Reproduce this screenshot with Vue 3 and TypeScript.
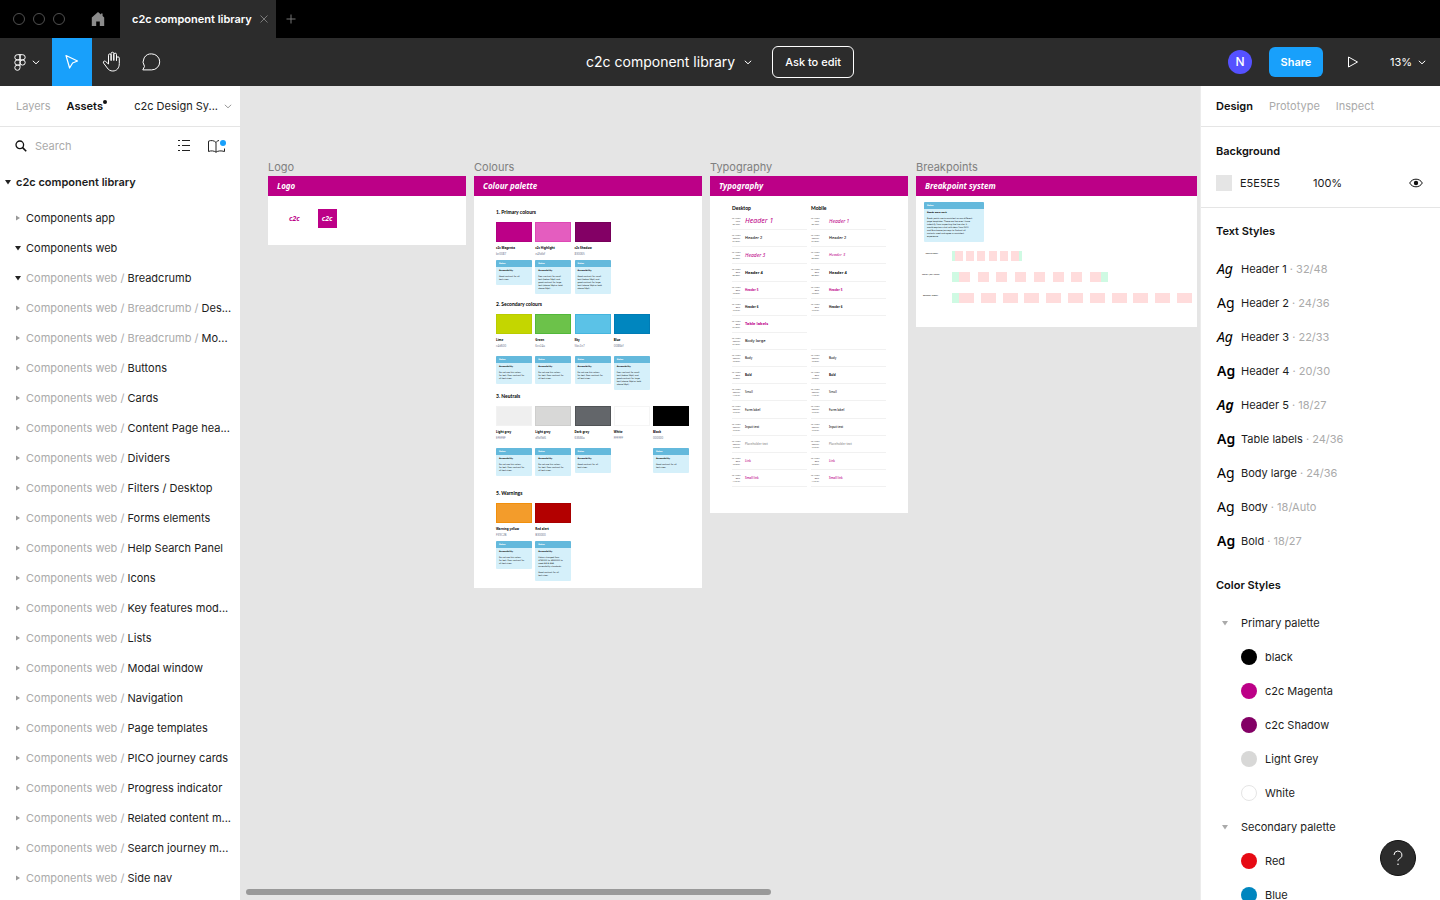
<script setup lang="ts">
interface TreeItem { path: string; name: string; open?: boolean }
interface Note { title: string; lines: string }
interface Swatch { name: string; hex: string; color: string; edge: string; note?: Note }
interface Section { title: string; tight: boolean; swatches: Swatch[] }
interface TypeRow { label: string; meta: string; desk: string; mob: string; tall?: boolean; noMobile?: boolean; noLine?: boolean }
interface TextStyle { name: string; size: string; italic: boolean; bold: boolean }
interface ColorGroup { name: string; items: { name: string; color: string }[] }

const web = 'Components web / '
const tree: TreeItem[] = [
  { path: '', name: 'Components app' },
  { path: '', name: 'Components web', open: true },
  { path: web, name: 'Breadcrumb', open: true },
  { path: web + 'Breadcrumb / ', name: 'Des...' },
  { path: web + 'Breadcrumb / ', name: 'Mo...' },
  ...[
    'Buttons', 'Cards', 'Content Page hea...', 'Dividers', 'Filters / Desktop', 'Forms elements',
    'Help Search Panel', 'Icons', 'Key features mod...', 'Lists', 'Modal window', 'Navigation',
    'Page templates', 'PICO journey cards', 'Progress indicator', 'Related content m...',
    'Search journey m...', 'Side nav',
  ].map((name) => ({ path: web, name })),
]

const good: Note = { title: 'Accessibility', lines: 'Good contrast for all\ntext sizes.' }
const avoid: Note = { title: 'Accessibility', lines: 'Do not use this colour\nfor text. Poor contrast for\nall text sizes.' }
const poor: Note = { title: 'Accessibility', lines: 'Poor contrast for small\ntext (below 18pt) and\ngood contrast for large\ntext (above 18pt or bold\nabove 14pt).' }
const goodLong: Note = { title: 'Accessibility', lines: 'Good contrast for small\ntext (below 18pt) and\ngood contrast for large\ntext (above 18pt or bold\nabove 14pt).' }
const changed: Note = { title: 'Accessibility', lines: 'Colour changed from\n#FA1100 to #B30000 to\nmeet AA & AAA\naccessibility standards.\n\nGood contrast for all\ntext sizes.' }
const review: Note = { title: 'Needs more work', lines: 'Break points are inconsistent across different\npage templates. These are the ones I have\nindentify from inspecting the live site. It\nwould require a chat with devs from PICO\nand Brushwave journeys to find out all\nvariants used and agree a consistent\nexperience.' }

const sections: Section[] = [
  { title: '1. Primary colours', tight: true, swatches: [
    { name: 'c2c Magenta', hex: 'bc0087', color: '#bc0087', edge: '#b00080', note: good },
    { name: 'c2c Highlight', hex: 'e45dbf', color: '#e45dbf', edge: '#de48b5', note: poor },
    { name: 'c2c Shadow', hex: '830065', color: '#830065', edge: '#760059', note: goodLong },
  ] },
  { title: '2. Secondary colours', tight: false, swatches: [
    { name: 'Lime', hex: 'c4d600', color: '#c4d600', edge: '#b9cc00', note: avoid },
    { name: 'Green', hex: '6cc24a', color: '#6cc24a', edge: '#52b83a', note: avoid },
    { name: 'Sky', hex: '5bc2e7', color: '#5bc2e7', edge: '#45b5de', note: avoid },
    { name: 'Blue', hex: '0086bf', color: '#0086bf', edge: '#007cb5', note: poor },
  ] },
  { title: '3. Neutrals', tight: false, swatches: [
    { name: 'Light grey', hex: 'EFEFEF', color: '#efefef', edge: '#f2f2f2', note: avoid },
    { name: 'Light grey', hex: 'd9d9d6', color: '#d8d8d7', edge: '#cececd', note: avoid },
    { name: 'Dark grey', hex: '63666a', color: '#63666a', edge: '#505356', note: good },
    { name: 'White', hex: 'FFFFFF', color: '#ffffff', edge: '#f5f5f5' },
    { name: 'Black', hex: '000000', color: '#000000', edge: '#000000', note: good },
  ] },
  { title: '5. Warnings', tight: true, swatches: [
    { name: 'Warning yellow', hex: 'F39C2B', color: '#f39c2b', edge: '#f18f0c', note: avoid },
    { name: 'Red alert', hex: 'B30000', color: '#b30000', edge: '#a80000', note: changed },
  ] },
]

const typeRows: TypeRow[] = [
  { label: 'Header 1', meta: 'FS Albert\nItalic\n32/48px', desk: 's7 it mag', mob: 's5 it mag' },
  { label: 'Header 2', meta: 'FS Albert\nRegular\n24/36px', desk: 's4 md', mob: 's4 md' },
  { label: 'Header 3', meta: 'FS Albert\nItalic\n22/33px', desk: 's5 it mag', mob: 's4 it mag' },
  { label: 'Header 4', meta: 'FS Albert\nBold\n20/30px', desk: 's4 bd', mob: 's4 bd', tall: true },
  { label: 'Header 5', meta: 'FS Albert\nBold\n18/27px', desk: 's3 bd mag', mob: 's3 bd mag' },
  { label: 'Header 6', meta: 'FS Albert\nBold\n16/24px', desk: 's3 bd', mob: 's3 bd' },
  { label: 'Table labels', meta: 'FS Albert\nBold\n24/36px', desk: 's4 bd mag', mob: '', noMobile: true, noLine: true },
  { label: 'Body large', meta: 'FS Albert\nRegular\n24/36px', desk: 's4 md', mob: '', noMobile: true },
  { label: 'Body', meta: 'FS Albert\nRegular\n18/27px', desk: 's3 md', mob: 's3 md' },
  { label: 'Bold', meta: 'FS Albert\nBold\n18/27px', desk: 's3 bd', mob: 's3 bd' },
  { label: 'Small', meta: 'FS Albert\nRegular\n14/21px', desk: 's3', mob: 's3' },
  { label: 'Form label', meta: 'FS Albert\nRegular\n16/24px', desk: 's3 md', mob: 's3 md', tall: true },
  { label: 'Input text', meta: 'FS Albert\nRegular\n16/24px', desk: 's3 md', mob: 's3 md' },
  { label: 'Placeholder text', meta: 'FS Albert\nRegular\n16/24px', desk: 's3 dim', mob: 's3 dim' },
  { label: 'Link', meta: 'FS Albert\nBold\n18/27px', desk: 's3 md mag', mob: 's3 md mag' },
  { label: 'Small link', meta: 'FS Albert\nBold\n14/21px', desk: 's3 md mag', mob: 's3 md mag' },
]

const grids = [
  { label: 'Mobile 360px', cls: 'small', columns: 6, end: true },
  { label: 'Tablet 1,024-768px', cls: 'medium', columns: 8, end: true },
  { label: 'Desktop 1280px', cls: 'large', columns: 11, end: false },
]

const textStyles: TextStyle[] = [
  { name: 'Header 1', size: '32/48', italic: true, bold: false },
  { name: 'Header 2', size: '24/36', italic: false, bold: false },
  { name: 'Header 3', size: '22/33', italic: true, bold: false },
  { name: 'Header 4', size: '20/30', italic: false, bold: true },
  { name: 'Header 5', size: '18/27', italic: true, bold: true },
  { name: 'Table labels', size: '24/36', italic: false, bold: true },
  { name: 'Body large', size: '24/36', italic: false, bold: false },
  { name: 'Body', size: '18/Auto', italic: false, bold: false },
  { name: 'Bold', size: '18/27', italic: false, bold: true },
]

const colorGroups: ColorGroup[] = [
  { name: 'Primary palette', items: [
    { name: 'black', color: '#000000' },
    { name: 'c2c Magenta', color: '#bc0087' },
    { name: 'c2c Shadow', color: '#830065' },
    { name: 'Light Grey', color: '#d8d8d7' },
    { name: 'White', color: '#ffffff' },
  ] },
  { name: 'Secondary palette', items: [
    { name: 'Red', color: '#e60a14' },
    { name: 'Blue', color: '#0086bf' },
  ] },
]
</script>

<template>
  <div class="app">
    <header class="tabbar">
      <div class="lights"><i></i><i></i><i></i></div>
      <button class="home" aria-label="Home">
        <svg width="14" height="14" viewBox="0 0 14 14"><path d="M7 0 .8 5.4V14h4.4V9.4h3.6V14h4.4V5.4L11.6 4V1.4H10v1.2z" fill="#8c8c8c" /></svg>
      </button>
      <div class="filetab">
        <span>c2c component library</span>
        <button aria-label="Close tab">
          <svg width="8" height="8" viewBox="0 0 8 8"><path d="m.5.5 7 7m0-7-7 7" stroke="#7a7a7a" fill="none" /></svg>
        </button>
      </div>
      <button class="plus" aria-label="New tab">
        <svg width="10" height="10" viewBox="0 0 10 10"><path d="M5 .5v9M.5 5h9" stroke="#777" fill="none" /></svg>
      </button>
    </header>

    <div class="toolbar">
      <div class="tools">
        <button class="menu" aria-label="Main menu">
          <svg width="12" height="17" viewBox="0 0 12 17" fill="none" stroke="#fff"><path d="M6 .7H3.4a2.6 2.6 0 0 0 0 5.2H6zM6 .7h2.6a2.6 2.6 0 0 1 0 5.2H6zM6 5.900H3.400a2.600 2.600 0 0 0 0 5.200H6zM6 11.100H3.400A2.600 2.600 0 1 0 6 13.700z" /><circle cx="8.600" cy="8.500" r="2.600" /></svg>
          <svg width="8" height="5" viewBox="0 0 8 5"><path d="m.8.8 3.200 3 3.200-3" stroke="#fff" fill="none" /></svg>
        </button>
        <button class="tool active" aria-label="Move">
          <svg width="14" height="16" viewBox="0 0 14 16"><path d="M1 1.500 12.500 7 7.600 9 4.600 14z" stroke="#fff" stroke-width="1.200" stroke-linejoin="round" fill="none" /></svg>
        </button>
        <button class="tool" aria-label="Hand">
          <svg width="20" height="22" viewBox="0 0 20 22" fill="none" stroke="#fff" stroke-linecap="round" stroke-linejoin="round"><path d="M6.500 10V4.200a1.300 1.300 0 0 1 2.600 0V9.500M9.100 9V2.600a1.300 1.300 0 0 1 2.700 0V9.300M11.800 9V3.500a1.300 1.300 0 0 1 2.700 0v6M14.500 7.200a1.400 1.400 0 0 1 2.800 0v5.300c0 4.500-2.500 7.500-6.500 7.500-2.500 0-4.200-1-5.500-3L1.600 12.100c-.9-1.400.7-2.700 1.900-1.700l3 2.600V9.500" /></svg>
        </button>
        <button class="tool" aria-label="Comment">
          <svg width="20" height="18" viewBox="1 0 20 18"><path d="M10.700.9a8 8 0 1 1 0 16H1.800l1.700-3.500A8 8 0 0 1 10.700.9z" stroke="#fff" fill="none" stroke-linejoin="round" /></svg>
        </button>
      </div>
      <div class="filebar">
        <button class="filename">c2c component library
          <svg width="8" height="5" viewBox="0 0 8 5"><path d="m.8.8 3.200 3 3.200-3" stroke="#fff" fill="none" /></svg>
        </button>
        <button class="ask">Ask to edit</button>
      </div>
      <div class="actions">
        <span class="avatar">N</span>
        <button class="share">Share</button>
        <button class="play" aria-label="Present">
          <svg width="12" height="12" viewBox="0 0 12 12"><path d="M1.500 1v10l9-5z" stroke="#fff" fill="none" stroke-linejoin="round" /></svg>
        </button>
        <button class="zoom">13%
          <svg width="8" height="5" viewBox="0 0 8 5"><path d="m.8.8 3.200 3 3.200-3" stroke="#fff" fill="none" /></svg>
        </button>
      </div>
    </div>

    <main class="body">
      <aside class="left">
        <nav class="tabs">
          <button>Layers</button>
          <button class="on assets">Assets<i class="dot"></i></button>
          <button class="page">c2c Design Sy...
            <svg width="8" height="5" viewBox="0 0 8 5"><path d="m.8.8 3.200 3 3.200-3" stroke="#999" fill="none" /></svg>
          </button>
        </nav>
        <div class="search">
          <label for="asset-search" aria-label="Search assets">
            <svg width="12" height="12" viewBox="0 0 12 12" fill="none" stroke="#111"><circle cx="4.800" cy="4.800" r="3.800" stroke-width="1.300" /><path d="m7.600 7.600 3.600 3.600" stroke-width="1.600" /></svg>
          </label>
          <input id="asset-search" type="text" placeholder="Search" />
          <button aria-label="List view">
            <svg width="14" height="12" viewBox="0 0 14 12"><path d="M0 .5h2M4 .5h8M0 5.500h2M4 5.500h8M0 10.500h2M4 10.500h8" stroke="#222" fill="none" /></svg>
          </button>
          <button aria-label="Team library">
            <svg width="20" height="14" viewBox="0 0 20 14"><path d="M9 3.500C7.500 1.500 4 1 1.500 2.200v10.300c2.500-1 5.500-.8 7.500.7 2-1.500 5-1.700 8.500-.7V9.500M9 3.500v9.700M9 3.500c.5-1 1.500-1.700 3-2" stroke="#222" fill="none" /><circle cx="16" cy="4" r="3" fill="#18a0fb" /></svg>
          </button>
        </div>
        <button class="root"><svg width="6" height="5" viewBox="0 0 6 5"><path d="M0 0h6L3 4.500z" fill="#222" /></svg>c2c component library</button>
        <ul class="tree">
          <li v-for="(t, i) in tree" :key="i">
            <button>
              <svg width="6" height="6" viewBox="0 0 6 6"><path v-if="t.open" d="M0 1h6L3 5.500z" fill="#222" /><path v-else d="M1 .5v5L5 3z" fill="#999" /></svg>
              <span><span class="path">{{ t.path }}</span>{{ t.name }}</span>
            </button>
          </li>
        </ul>
      </aside>

      <section class="canvas">
        <div class="frames">
          <div class="frame logo">
            <h2>Logo</h2>
            <div class="sheet">
              <h3>Logo</h3>
              <div class="marks"><span>c2c</span><span class="inverse">c2c</span></div>
            </div>
          </div>

          <div class="frame colours">
            <h2>Colours</h2>
            <div class="sheet">
              <h3>Colour palette</h3>
              <div class="sections">
                <div v-for="s in sections" :key="s.title" class="section" :class="{ tight: s.tight }">
                  <h4>{{ s.title }}</h4>
                  <div class="swatches">
                    <div v-for="(c, i) in s.swatches" :key="i" class="swatch">
                      <div class="chip" :style="{ background: c.color, borderColor: c.edge }"></div>
                      <b>{{ c.name }}</b>
                      <span>{{ c.hex }}</span>
                      <div v-if="c.note" class="note">
                        <header>Notes</header>
                        <strong>{{ c.note.title }}</strong>
                        <p>{{ c.note.lines }}</p>
                      </div>
                    </div>
                  </div>
                </div>
              </div>
            </div>
          </div>

          <div class="frame type">
            <h2>Typography</h2>
            <div class="sheet">
              <h3>Typography</h3>
              <div class="columns">
                <div class="column">
                  <h4>Desktop</h4>
                  <div v-for="r in typeRows" :key="r.label" class="trow" :class="{ tall: r.tall }">
                    <small>{{ r.meta }}</small><span :class="r.desk">{{ r.label }}</span>
                  </div>
                </div>
                <div class="column mobile">
                  <h4>Mobile</h4>
                  <div v-for="r in typeRows" :key="r.label" class="trow" :class="{ tall: r.tall, bare: r.noLine }">
                    <template v-if="!r.noMobile"><small>{{ r.meta }}</small><span :class="r.mob">{{ r.label }}</span></template>
                  </div>
                </div>
              </div>
            </div>
          </div>

          <div class="frame breaks">
            <h2>Breakpoints</h2>
            <div class="sheet">
              <h3>Breakpoint system</h3>
              <div class="note wide">
                <header>Notes</header>
                <strong>{{ review.title }}</strong>
                <p>{{ review.lines }}</p>
              </div>
              <div class="grids">
                <div v-for="g in grids" :key="g.cls" class="gridrow" :class="g.cls">
                  <span>{{ g.label }}</span>
                  <i class="margin"></i>
                  <div class="cols"><i v-for="n in g.columns" :key="n"></i></div>
                  <i v-if="g.end" class="margin"></i>
                </div>
              </div>
            </div>
          </div>
        </div>
        <div class="scrollbar"></div>
      </section>

      <aside class="right">
        <nav class="tabs">
          <button class="on">Design</button>
          <button>Prototype</button>
          <button>Inspect</button>
        </nav>
        <div class="background">
          <h5>Background</h5>
          <div class="fill">
            <i class="square"></i>
            <span class="hex">E5E5E5</span>
            <span>100%</span>
            <button aria-label="Toggle visibility">
              <svg width="14" height="10" viewBox="0 0 14 10"><path d="M.7 5C3.400-.1 10.600-.1 13.300 5 10.600 10.100 3.400 10.100.7 5z" fill="none" stroke="#111" /><circle cx="7" cy="5" r="2.200" fill="#111" /></svg>
            </button>
          </div>
        </div>
        <h5 class="heading">Text Styles</h5>
        <ul class="styles">
          <li v-for="t in textStyles" :key="t.name">
            <span class="ag" :class="{ italic: t.italic, bold: t.bold }">Ag</span>
            <span>{{ t.name }}<em> · {{ t.size }}</em></span>
          </li>
        </ul>
        <h5 class="heading second">Color Styles</h5>
        <div v-for="g in colorGroups" :key="g.name" class="group">
          <button><svg width="6" height="5" viewBox="0 0 6 5"><path d="M0 0h6L3 4.500z" fill="#aaa" /></svg>{{ g.name }}</button>
          <ul>
            <li v-for="c in g.items" :key="c.name"><i :class="{ ring: c.name === 'White' }" :style="{ background: c.color }"></i>{{ c.name }}</li>
          </ul>
        </div>
      </aside>
    </main>
    <button class="help" aria-label="Help">
      <svg width="12" height="16" viewBox="0 0 12 16"><path d="M2 5a4 4 0 1 1 5.800 3.600C6.500 9.200 6 9.700 6 11.200" stroke="#fff" fill="none" /><circle cx="6" cy="14.200" r=".8" fill="#fff" /></svg>
    </button>
  </div>
</template>

<style>
body { margin: 0; background: #e5e5e5; }
</style>

<style scoped>
.app { height: 100vh; display: flex; flex-direction: column; overflow: hidden; position: relative; font-family: Inter, "Liberation Sans", sans-serif; font-size: 11px; line-height: 16px; color: #1c1c1c; }
.app * { box-sizing: border-box; }
button { border: 0; padding: 0; margin: 0; background: none; font: inherit; color: inherit; display: flex; align-items: center; justify-content: center; white-space: nowrap; cursor: pointer; }
ul { list-style: none; margin: 0; padding: 0; }
h2, h3, h4, h5, p { margin: 0; }
svg { flex: none; display: block; }

.tabbar { flex: none; height: 38px; background: #000; display: flex; align-items: center; }
.lights { display: flex; gap: 8px; padding-left: 13px; }
.lights i { width: 12px; height: 12px; border: 1px solid #505050; border-radius: 50%; }
.home { width: 44px; margin-left: 11px; }
.filetab { align-self: stretch; background: #2c2c2c; color: #fff; font-weight: 600; display: flex; align-items: center; gap: 8px; padding: 0 8px 0 12px; }
.plus { width: 30px; }

.toolbar { flex: none; height: 48px; background: #2c2c2c; color: #fff; display: grid; grid-template-columns: 1fr auto 1fr; align-items: center; }
.tools { display: flex; height: 48px; }
.menu { width: 52px; gap: 6px; padding-left: 2px; }
.tool { width: 40px; }
.tool.active { background: #18a0fb; }
.filebar { display: flex; gap: 20px; align-items: center; }
.filename { font-size: 14px; gap: 9px; }
.ask { border: 1px solid #fff; border-radius: 6px; height: 32px; padding: 0 12px; font-weight: 500; }
.actions { display: flex; justify-content: flex-end; align-items: center; padding-right: 14px; }
.avatar { width: 24px; height: 24px; border-radius: 50%; background: #5551ff; text-align: center; line-height: 24px; margin-right: 17px; font-size: 12px; font-weight: 500; }
.share { background: #18a0fb; border-radius: 6px; width: 54px; height: 30px; font-weight: 600; }
.play { width: 60px; }
.zoom { gap: 6px; margin-left: 7px; }

.body { flex: 1; min-height: 0; display: flex; }
.left, .right { flex: none; width: 240px; background: #fff; overflow: hidden; }
.right { border-left: 1px solid #ececec; }
.tabs { height: 41px; border-bottom: 1px solid #e5e5e5; display: flex; align-items: center; gap: 16px; padding: 0 8px 0 16px; color: #aaa; }
.tabs .on { color: #111; font-weight: 600; }
.right .tabs, .background, .heading, .styles { padding-left: 15px; }
.assets .dot { width: 4px; height: 4px; border-radius: 50%; background: #111; align-self: flex-start; margin-top: 2px; }
.tabs .page { color: #222; gap: 6px; margin-left: auto; }
.search { height: 38px; display: flex; align-items: center; padding: 0 13px 0 15px; }
.search input { flex: 1; min-width: 0; border: 0; outline: 0; padding: 0; margin-left: 8px; font: inherit; color: #222; background: none; }
.search input::placeholder { color: #aaa; opacity: 1; }
.search button + button { margin-left: 15px; }
.root { font-weight: 600; gap: 5px; height: 34px; padding-left: 5px; }
.tree { padding-top: 4px; }
.tree button { height: 30px; gap: 5px; padding-left: 15px; }
.tree span { white-space: pre; }
.tree .path { color: #aaa; }

.canvas { flex: 1; min-width: 0; background: #e5e5e5; overflow: hidden; display: flex; flex-direction: column; justify-content: space-between; }
.frames { display: flex; align-items: flex-start; gap: 8px; padding: 73px 0 0 28px; font-family: "Noto Sans", "Open Sans", sans-serif; }
.frame { flex: none; }
.frame h2 { font: 400 11px/17px Inter, sans-serif; color: #808080; }
.sheet { background: #fff; }
.sheet h3 { background: #bc0087; color: #fff; font-size: 8px; line-height: 20px; font-style: italic; font-weight: 700; padding-left: 9px; }
.logo .sheet { width: 198px; height: 69px; }
.colours .sheet { width: 228px; height: 412px; }
.type .sheet { width: 198px; height: 337px; }
.breaks .sheet { width: 281px; height: 151px; }
.marks { display: flex; gap: 18px; align-items: center; padding: 13px 21px; color: #bc0087; font-style: italic; font-weight: 700; font-size: 7px; line-height: 19px; }
.marks .inverse { width: 19px; height: 19px; background: #bc0087; color: #fff; text-align: center; }

.sections { display: grid; grid-template-rows: 92px 92px 97px auto; padding: 13px 0 0 22px; }
.section h4 { font: 700 5px/6px Lato, sans-serif; color: #000; }
.swatches { display: grid; grid-template-columns: repeat(5, 36px); justify-content: space-between; width: 193px; margin-top: 7px; font-size: 3px; line-height: 6px; }
.chip { height: 20px; border: 1px solid; margin-bottom: 3px; }
.swatch b, .swatch > span { display: block; height: 6px; color: #000; }
.swatch > span { color: #707890; }
.swatch .note { margin-top: 7px; }
.tight .swatch .note { margin-top: 3px; }
.note { background: #d5f0fa; border-radius: 1px; padding-bottom: 4px; font: 2px/3px "DejaVu Sans", sans-serif; color: #000; overflow: hidden; }
.note header { height: 7px; line-height: 7px; background: #64b9dc; color: #fff; font-weight: 700; padding-left: 3px; }
.note strong { display: block; padding: 2px 3px 3px; line-height: 3px; }
.note p { padding-left: 3px; white-space: pre; }
.note.wide { width: 60px; margin: 6px 0 0 8px; }

.columns { display: grid; grid-template-columns: 75px 75px; gap: 4px; padding: 9px 0 0 22px; }
.columns h4 { font: 700 5px/6px Lato, sans-serif; color: #000; height: 8px; }
.trow { height: 17px; display: flex; align-items: center; gap: 5px; border-bottom: 1px solid #f1f1f1; white-space: nowrap; line-height: 8px; color: #111; }
.trow.tall { height: 18px; }
.trow.bare { border-color: transparent; }
.trow small { width: 8px; font-size: 2px; line-height: 3px; white-space: pre; text-align: right; color: #444; }
.mobile .trow { gap: 10px; }
.s7 { font-size: 7px; }
.s5 { font-size: 5px; }
.s4 { font-size: 4px; }
.s3 { font-size: 3px; }
.it { font-style: italic; }
.md { font-weight: 500; }
.bd { font-weight: 700; }
.mag { color: #bc0087; }
.dim { color: #777; }

.grids { display: grid; gap: 11px; padding: 9px 0 0 6px; }
.gridrow { display: flex; height: 10px; }
.gridrow > span { width: 16px; margin-right: 14px; font-size: 2px; line-height: 6px; text-align: right; white-space: nowrap; color: #000; }
.margin { width: 7px; background: #cffae3; }
.small .margin { width: 3px; }
.cols { display: flex; justify-content: space-between; width: 64px; }
.cols i { width: 8px; background: #ffdcdc; }
.medium .cols { width: 142px; }
.medium .cols i { width: 11px; }
.large .cols { width: 233px; }
.large .cols i { width: 15px; }
.scrollbar { width: 525px; height: 6px; border-radius: 3px; background: #999; margin: 0 0 5px 6px; }

h5 { font-size: 11px; line-height: 16px; font-weight: 600; color: #111; }
.background { height: 81px; padding-top: 16px; border-bottom: 1px solid #e5e5e5; }
.fill { display: flex; align-items: center; margin-top: 12px; height: 24px; padding-right: 17px; }
.square { width: 16px; height: 16px; background: #e5e5e5; }
.hex { width: 73px; margin-left: 8px; }
.fill button { margin-left: auto; }
.heading { padding-top: 15px; margin-bottom: 13px; }
.heading.second { padding-top: 19px; }
.styles li { height: 34px; display: flex; align-items: center; }
.ag { width: 25px; padding-left: 1px; font: 400 14px/20px "Noto Sans", "Open Sans", sans-serif; color: #000; }
.ag.italic { font-style: italic; }
.ag.bold { font-weight: 600; }
.styles em { font-style: normal; color: #aaa; }
.group button { height: 34px; padding-left: 21px; gap: 13px; }
.group li { height: 34px; display: flex; align-items: center; gap: 8px; padding-left: 40px; }
.group i { width: 16px; height: 16px; border-radius: 50%; }
.group .ring { border: 1px solid #e5e5e5; }
.help { position: absolute; right: 24px; bottom: 24px; width: 36px; height: 36px; border-radius: 50%; background: #2c2c2c; border: 1px solid #111; }
</style>
